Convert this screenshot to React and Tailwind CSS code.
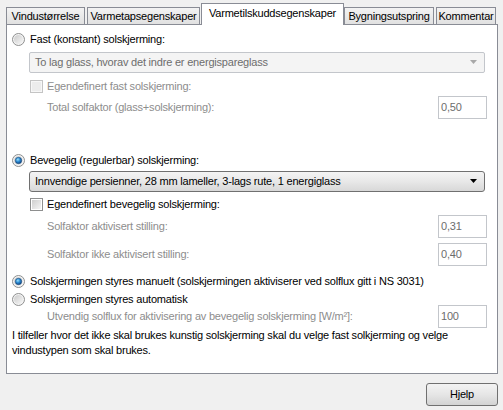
import React from "react";

function Radio({ checked }) {
  return (
    <svg width="13" height="13" viewBox="0 0 13 13" className="shrink-0">
      <defs>
        <linearGradient id="rg-bg" x1="0" y1="0" x2="1" y2="1">
          <stop offset="0" stopColor="#cbcbcb" />
          <stop offset="1" stopColor="#f7f7f7" />
        </linearGradient>
        <radialGradient id="rg-dot" cx="0.4" cy="0.35" r="0.7">
          <stop offset="0" stopColor="#9ee2fb" />
          <stop offset="0.45" stopColor="#2f8fd6" />
          <stop offset="1" stopColor="#0b3a7a" />
        </radialGradient>
      </defs>
      <circle cx="6.5" cy="6.5" r="6" fill="#f4f4f4" stroke="#8e8f8f" strokeWidth="1" />
      <circle cx="6.5" cy="6.5" r="4.5" fill="url(#rg-bg)" />
      {checked && <circle cx="6.5" cy="6.5" r="3.2" fill="url(#rg-dot)" stroke="#1a4c7c" strokeWidth="0.6" />}
    </svg>
  );
}

function Check({ disabled }) {
  return (
    <div
      className={
        "w-[13px] h-[13px] shrink-0 border p-[1px] " +
        (disabled ? "border-[#c4c4c4] bg-[#f7f7f7]" : "border-[#8e8f8f] bg-white")
      }
    >
      <div
        className={
          "w-full h-full " +
          (disabled
            ? "bg-[#ececec]"
            : "bg-linear-to-br from-[#cfcfcf] to-[#f5f5f5]")
        }
      />
    </div>
  );
}

function Arrow({ color }) {
  return (
    <svg width="8" height="5" viewBox="0 0 8 5">
      <path d="M0 0 H7 L3.5 4 Z" fill={color} />
    </svg>
  );
}

function Field({ value }) {
  return (
    <div className="w-[49px] h-[23px] border border-[#c3c6cb] bg-white flex items-center pl-[2px] text-[#6d6d6d] shrink-0">
      {value}
    </div>
  );
}

const tabBase =
  "h-[17px] border border-b-0 border-[#898c95] bg-linear-to-b from-[#f3f3f3] to-[#e1e1e1] flex items-center justify-center leading-none whitespace-nowrap";

export default function App() {
  return (
    <div className="w-[503px] h-[410px] bg-[#f0f0f0] font-['Liberation_Sans',Arial,sans-serif] text-[11px] tracking-[-0.2px] text-black flex flex-col">
      {/* tabs */}
      <div className="h-[24px] flex items-end">
        <div className={tabBase + " ml-[6px] w-[79px]"}>Vindustørrelse</div>
        <div className={tabBase + " ml-[2px] w-[113px]"}>Varmetapsegenskaper</div>
        <div className="relative z-10 mb-[-1px] ml-[1px] w-[143px] h-[22px] border border-b-0 border-[#898c95] bg-white flex items-center justify-center pb-[2px] leading-none whitespace-nowrap">
          Varmetilskuddsegenskaper
        </div>
        <div className={tabBase + " ml-0 w-[90px]"}>Bygningsutspring</div>
        <div className={tabBase + " ml-[2px] w-[60px]"}>Kommentar</div>
      </div>

      {/* panel */}
      <div className="ml-[6px] w-[492px] h-[350px] border border-[#898c95] bg-white flex flex-col">
        {/* Fast */}
        <div className="mt-[5px] h-[18px] flex items-center pl-[5px]">
          <Radio checked={false} />
          <span className="ml-[5px]">Fast (konstant) solskjerming:</span>
        </div>
        <div className="mt-[4px] ml-[22px] w-[456px] h-[21px] rounded-[2px] border border-[#c3c6cb] bg-[#f4f4f4] flex items-center justify-between pl-[5px] pr-[6px] text-[#6d6d6d]">
          <span>To lag glass, hvorav det indre er energispareglass</span>
          <Arrow color="#a8a8a8" />
        </div>
        <div className="mt-[4px] h-[18px] flex items-center pl-[23px] text-[#8d8d8d]">
          <Check disabled />
          <span className="ml-[4px]">Egendefinert fast solskjerming:</span>
        </div>
        <div className="mt-[1px] h-[23px] flex items-center pl-[40px] pr-[10px] text-[#8d8d8d]">
          <span>Total solfaktor (glass+solskjerming):</span>
          <div className="ml-auto">
            <Field value="0,50" />
          </div>
        </div>

        {/* Bevegelig */}
        <div className="mt-[32px] h-[18px] flex items-center pl-[5px]">
          <Radio checked />
          <span className="ml-[5px]">Bevegelig (regulerbar) solskjerming:</span>
        </div>
        <div className="mt-[2px] ml-[22px] w-[456px] h-[21px] rounded-[3px] border border-[#707070] bg-linear-to-b from-[#f4f4f4] via-[#e8e8e8] to-[#d8d8d8] flex items-center justify-between pl-[5px] pr-[6px]">
          <span>Innvendige persienner, 28 mm lameller, 3-lags rute, 1 energiglass</span>
          <Arrow color="#000" />
        </div>
        <div className="mt-[3px] h-[18px] flex items-center pl-[23px]">
          <Check />
          <span className="ml-[4px]">Egendefinert bevegelig solskjerming:</span>
        </div>
        <div className="mt-[2px] h-[23px] flex items-center pl-[40px] pr-[10px] text-[#8d8d8d]">
          <span>Solfaktor aktivisert stilling:</span>
          <div className="ml-auto">
            <Field value="0,31" />
          </div>
        </div>
        <div className="mt-[5px] h-[23px] flex items-center pl-[40px] pr-[10px] text-[#8d8d8d]">
          <span>Solfaktor ikke aktivisert stilling:</span>
          <div className="ml-auto">
            <Field value="0,40" />
          </div>
        </div>

        {/* styring */}
        <div className="mt-[7px] h-[16px] flex items-center pl-[5px]">
          <Radio checked />
          <span className="ml-[5px]">
            Solskjermingen styres manuelt (solskjermingen aktiviserer ved solflux gitt i NS 3031)
          </span>
        </div>
        <div className="mt-[4px] h-[12px] flex items-center pl-[5px]">
          <Radio checked={false} />
          <span className="ml-[5px]">Solskjermingen styres automatisk</span>
        </div>
        <div className="h-[23px] flex items-center pl-[40px] pr-[10px] text-[#8d8d8d]">
          <span>Utvendig solflux for aktivisering av bevegelig solskjerming [W/m²]:</span>
          <div className="ml-auto">
            <Field value="100" />
          </div>
        </div>
        <p className="pl-[5px] leading-[15px]">
          I tilfeller hvor det ikke skal brukes kunstig solskjerming skal du velge fast solkjerming og velge
          <br />
          vindustypen som skal brukes.
        </p>
      </div>

      {/* footer */}
      <div className="mt-[9px] flex justify-end pr-[5px]">
        <button className="w-[72px] h-[23px] rounded-[3px] border border-[#707070] bg-linear-to-b from-[#f3f3f3] via-[#e6e6e6] to-[#d3d3d3] flex items-center justify-center">
          Hjelp
        </button>
      </div>
    </div>
  );
}
